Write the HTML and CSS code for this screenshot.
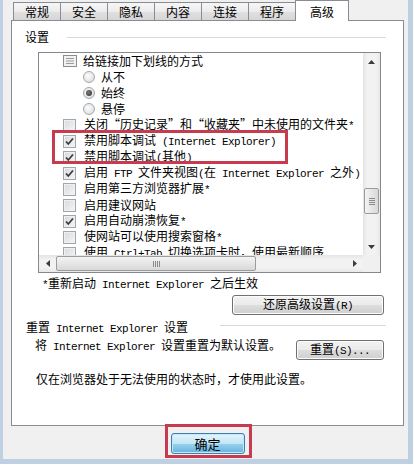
FILE: index.html
```html
<!DOCTYPE html>
<html lang="zh-CN">
<head>
  <meta charset="utf-8">
  <title>Internet 选项 - 高级</title>
  <link rel="stylesheet" href="styles.css">
</head>
<body>
  <div id="window">
    <div class="tabs">
      <div class="tab">常规</div>
      <div class="tab">安全</div>
      <div class="tab">隐私</div>
      <div class="tab">内容</div>
      <div class="tab">连接</div>
      <div class="tab">程序</div>
      <div class="tab active">高级</div>
    </div>

    <div class="panel">
      <div class="group-head">
        <span>设置</span>
        <div class="rule"></div>
      </div>

      <div class="listbox">
        <div class="items">
          <div class="row">
            <svg class="icon" width="14" height="12" viewBox="0 0 14 12">
              <rect x="0.5" y="0.5" width="13" height="11" fill="#f2f2f2" stroke="#8c8c8c"/>
              <path d="M3 3.5h8M3 6h8M3 8.5h8" stroke="#9a9a9a" stroke-width="1"/>
            </svg>
            <span class="txt">给链接加下划线的方式</span>
          </div>
          <div class="row sub"><span class="rb"></span><span class="txt">从不</span></div>
          <div class="row sub"><span class="rb on"></span><span class="txt">始终</span></div>
          <div class="row sub"><span class="rb"></span><span class="txt">悬停</span></div>
          <div class="row"><span class="cb"></span><span class="txt">关闭“历史记录”和“收藏夹”中未使用的文件夹<span class="en">*</span></span></div>
          <div class="row"><span class="cb on"><svg width="9" height="9" viewBox="0 0 9 9"><path d="M1 4.5l2.3 2.5L8 1.5" fill="none" stroke="#3a3a3a" stroke-width="1.7"/></svg></span><span class="txt">禁用脚本调试<span class="en"> (Internet Explorer)</span></span></div>
          <div class="row"><span class="cb on"><svg width="9" height="9" viewBox="0 0 9 9"><path d="M1 4.5l2.3 2.5L8 1.5" fill="none" stroke="#3a3a3a" stroke-width="1.7"/></svg></span><span class="txt">禁用脚本调试<span class="en">(</span>其他<span class="en">)</span></span></div>
          <div class="row"><span class="cb on"><svg width="9" height="9" viewBox="0 0 9 9"><path d="M1 4.5l2.3 2.5L8 1.5" fill="none" stroke="#3a3a3a" stroke-width="1.7"/></svg></span><span class="txt">启用<span class="en"> FTP </span>文件夹视图<span class="en">(</span>在<span class="en"> Internet Explorer </span>之外<span class="en">)</span></span></div>
          <div class="row"><span class="cb"></span><span class="txt">启用第三方浏览器扩展<span class="en">*</span></span></div>
          <div class="row"><span class="cb"></span><span class="txt">启用建议网站</span></div>
          <div class="row"><span class="cb on"><svg width="9" height="9" viewBox="0 0 9 9"><path d="M1 4.5l2.3 2.5L8 1.5" fill="none" stroke="#3a3a3a" stroke-width="1.7"/></svg></span><span class="txt">启用自动崩溃恢复<span class="en">*</span></span></div>
          <div class="row"><span class="cb"></span><span class="txt">使网站可以使用搜索窗格<span class="en">*</span></span></div>
          <div class="row"><span class="cb"></span><span class="txt">使用<span class="en"> Ctrl+Tab </span>切换选项卡时，使用最新顺序</span></div>
        </div>

        <div class="vscroll">
          <div class="arrow">
            <svg width="7" height="4" viewBox="0 0 7 4"><path d="M0 4L3.5 0L7 4z" fill="#3c3c3c"/></svg>
          </div>
          <div class="track">
            <div class="thumb-v">
              <svg width="6" height="7" viewBox="0 0 6 7"><path d="M0 0.5h6M0 2.5h6M0 4.5h6M0 6.5h6" stroke="#8a8a8a"/></svg>
            </div>
          </div>
          <div class="arrow">
            <svg width="7" height="4" viewBox="0 0 7 4"><path d="M0 0L3.5 4L7 0z" fill="#3c3c3c"/></svg>
          </div>
        </div>

        <div class="hscroll">
          <div class="arrow">
            <svg width="4" height="7" viewBox="0 0 4 7"><path d="M4 0L0 3.5L4 7z" fill="#3c3c3c"/></svg>
          </div>
          <div class="thumb-h">
            <svg width="7" height="6" viewBox="0 0 7 6"><path d="M0.5 0v6M2.5 0v6M4.5 0v6M6.5 0v6" stroke="#8a8a8a"/></svg>
          </div>
          <div class="arrow end">
            <svg width="4" height="7" viewBox="0 0 4 7"><path d="M0 0L4 3.5L0 7z" fill="#3c3c3c"/></svg>
          </div>
        </div>
        <div class="corner"></div>
      </div>

      <p class="note"><span class="en">*</span>重新启动<span class="en"> Internet Explorer </span>之后生效</p>

      <div class="actions">
        <button class="btn btn-wide">还原高级设置<span class="en">(R)</span></button>
      </div>

      <div class="group-head reset-head">
        <span>重置<span class="en"> Internet Explorer </span>设置</span>
        <div class="rule"></div>
      </div>

      <div class="reset-row">
        <p>将<span class="en"> Internet Explorer </span>设置重置为默认设置。</p>
        <button class="btn btn-reset">重置<span class="en">(S)...</span></button>
      </div>

      <p class="hint">仅在浏览器处于无法使用的状态时，才使用此设置。</p>
    </div>

    <div class="footer">
      <button class="btn btn-ok">确定</button>
    </div>

    <div class="mark mark-rows"></div>
    <div class="mark mark-ok"></div>
  </div>
</body>
</html>
```

FILE: styles.css
```css
* {
  box-sizing: border-box;
}
body {
  margin: 0;
  background-color: #f0f0f0;
  font-family: "Noto Sans CJK SC", sans-serif;
  font-size: 12px;
  line-height: 16px;
  color: #000;
}
p {
  margin: 0;
}
.en {
  font-family: "Liberation Mono", monospace;
  font-size: 11px;
  letter-spacing: -0.6px;
}
#window {
  position: relative;
  width: 413px;
  height: 464px;
  padding-left: 8px;
  border-left: 3px solid #bfd0e3;
  border-right: 5px solid #bfd0e3;
  border-bottom: 5px solid #bfd0e3;
  overflow: hidden;
}

/* tabs */
.tabs {
  position: relative;
  z-index: 1;
  display: flex;
  align-items: flex-end;
  height: 20px;
  padding-left: 2px;
}
.tab {
  height: 18px;
  padding: 0 11px;
  margin-right: -1px;
  border: 1px solid #898c95;
  border-bottom: none;
  background: linear-gradient(#f6f6f6, #ececec 50%, #e0e0e0 51%, #d6d6d6);
  line-height: 17px;
}
.tab.active {
  height: 21px;
  margin-bottom: -1px;
  padding: 0 14px;
  background: #fff;
  line-height: 21px;
}

/* panel */
.panel {
  width: 393px;
  height: 406px;
  border: 1px solid #898c95;
  background-color: #fff;
}
.group-head {
  display: flex;
  align-items: flex-start;
  height: 16px;
  margin-top: 8px;
  padding-left: 13px;
  white-space: nowrap;
}
.group-head .rule {
  flex: 1;
  margin: 8px 17px 0 18px;
  border-top: 1px solid #d5d9dd;
}
.reset-head {
  margin-top: 4px;
  padding-left: 14px;
}
.reset-head .rule {
  margin: 6px 17px 0 32px;
}

/* list */
.listbox {
  display: grid;
  grid-template-columns: 1fr 17px;
  grid-template-rows: 1fr 17px;
  width: 343px;
  height: 221px;
  margin: 7px 0 0 26px;
  border: 1px solid #828790;
}
.items {
  overflow: hidden;
}
.row {
  display: flex;
  align-items: center;
  height: 16px;
  padding-left: 24px;
  white-space: nowrap;
}
.row.sub {
  padding-left: 44px;
}
.icon {
  margin-right: 6px;
  flex-shrink: 0;
}
.cb {
  display: flex;
  align-items: center;
  justify-content: center;
  flex-shrink: 0;
  width: 13px;
  height: 13px;
  margin-right: 8px;
  border: 1px solid #a4a7aa;
  background: linear-gradient(135deg, #d6d8db, #f7f7f7);
  box-shadow: inset 0 0 0 1px #eef0f2;
}
.rb {
  position: relative;
  flex-shrink: 0;
  width: 12px;
  height: 12px;
  margin-right: 6px;
  border: 1px solid #a4a7aa;
  border-radius: 50%;
  background: radial-gradient(circle at 40% 40%, #fdfdfd, #d4d6d9);
}
.rb.on::after {
  content: "";
  position: absolute;
  left: 2px;
  top: 2px;
  width: 6px;
  height: 6px;
  border-radius: 50%;
  background: radial-gradient(circle at 40% 40%, #7a7a7a, #2a2a2a);
}

/* scrollbars */
.vscroll {
  display: flex;
  flex-direction: column;
  background: linear-gradient(to right, #e4e4e4, #f2f2f2 25%, #f2f2f2 75%, #e8e8e8);
}
.hscroll {
  display: flex;
  align-items: center;
  background: linear-gradient(#e4e4e4, #f2f2f2 25%, #f2f2f2 75%, #e8e8e8);
}
.arrow {
  display: flex;
  align-items: center;
  justify-content: center;
  flex-shrink: 0;
  width: 17px;
  height: 17px;
}
.arrow.end {
  margin-left: auto;
}
.track {
  flex: 1;
}
.thumb-v {
  display: flex;
  align-items: center;
  justify-content: center;
  width: 15px;
  height: 26px;
  margin: 118px 0 0 1px;
  border: 1px solid #9c9c9c;
  border-radius: 2px;
  background: linear-gradient(to right, #f4f4f4, #e6e6e6 50%, #d8d8d8);
}
.thumb-h {
  display: flex;
  align-items: center;
  justify-content: center;
  width: 200px;
  height: 15px;
  border: 1px solid #9c9c9c;
  border-radius: 2px;
  background: linear-gradient(#f4f4f4, #e6e6e6 50%, #d8d8d8);
}
.corner {
  background-color: #f0f0f0;
}

/* below the list */
.note {
  margin: 2px 0 0 30px;
}
.actions {
  display: flex;
  justify-content: flex-end;
  margin: 2px 19px 0 0;
}
.btn {
  height: 20px;
  padding: 0;
  border: 1px solid #707070;
  border-radius: 3px;
  background: linear-gradient(#f2f2f2, #ebebeb 50%, #dddddd 51%, #cfcfcf);
  box-shadow: inset 0 0 0 1px #fcfcfc;
  font-family: "Noto Sans CJK SC", sans-serif;
  font-size: 12px;
  line-height: 16px;
  color: #000;
}
.btn-wide {
  width: 152px;
}
.reset-row {
  display: flex;
  justify-content: space-between;
  margin-top: 2px;
  padding-left: 23px;
}
.btn-reset {
  width: 88px;
  margin: 3px 19px 0 0;
}
.hint {
  margin: 11px 0 0 24px;
}

/* footer */
.footer {
  display: flex;
  justify-content: center;
  width: 393px;
  margin-top: 7px;
}
.btn-ok {
  width: 74px;
  height: 21px;
  border-color: #3c7fb1;
  background: linear-gradient(#e5f4fc, #c4e5f6 50%, #98d1ef 51%, #68b3db);
  box-shadow: inset 0 0 0 1px #c0e8f8;
  font-size: 13px;
}

/* red highlight boxes */
.mark {
  position: absolute;
  border: 3px solid #c83a4e;
}
.mark-rows {
  left: 49px;
  top: 130px;
  width: 236px;
  height: 34px;
}
.mark-ok {
  left: 162px;
  top: 424px;
  width: 87px;
  height: 34px;
}
```
